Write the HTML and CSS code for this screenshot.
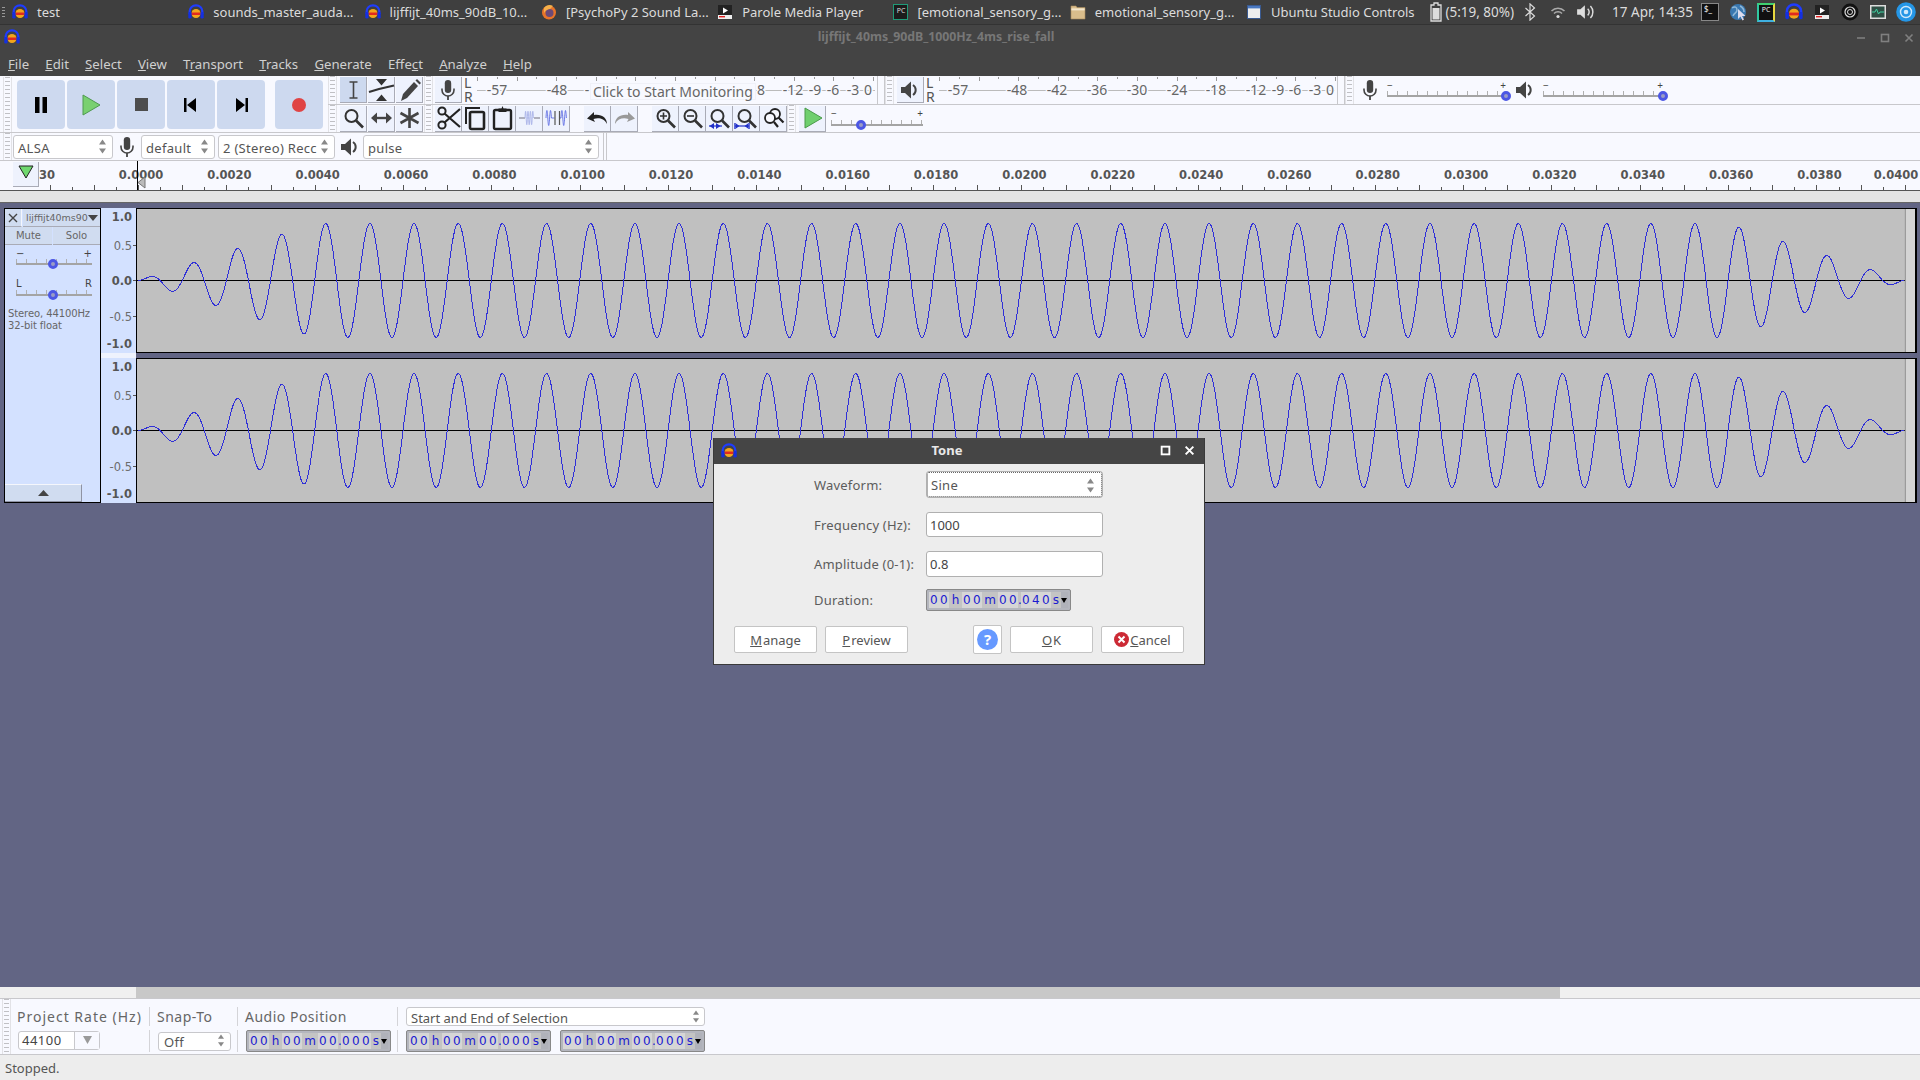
FILE: index.html
```html
<!DOCTYPE html>
<html lang="en">

<head>
    <meta charset="UTF-8">
    <title>lijffijt_40ms_90dB_1000Hz_4ms_rise_fall</title>
    <link rel="stylesheet" href="styles.css">
</head>

<body>
    <!-- icon sheet -->
    <svg class="icon-sheet" width="0" height="0">
        <symbol id="logo" viewBox="0 0 16 16">
            <ellipse cx="8" cy="9.500" rx="4.500" ry="4.500" fill="#f2a51c"/>
            <rect x="3.500" y="8.500" width="9" height="2.500" fill="#e02a20"/>
            <path d="M1.700 10V7a6.300 5.700 0 0 1 12.600 0v3" fill="none" stroke="#1f3cff" stroke-width="2.200"/>
            <rect x="0.300" y="8" width="3.200" height="6.500" rx="1.300" fill="#1430e0"/>
            <rect x="12.500" y="8" width="3.200" height="6.500" rx="1.300" fill="#1430e0"/>
        </symbol>
        <symbol id="firefox" viewBox="0 0 16 16">
            <circle cx="8" cy="8.500" r="7" fill="#e8742a"/>
            <circle cx="8.500" cy="9" r="4" fill="#6b4a78"/>
            <path d="M3 4C5 1 9 0 12 2L9 5C7 5 5 6 3 9Z" fill="#f6b04a"/>
        </symbol>
        <symbol id="parole" viewBox="0 0 16 16">
            <rect x="1" y="1" width="14" height="14" fill="#222"/>
            <rect x="1" y="11" width="14" height="4" fill="#eee"/>
            <rect x="2" y="12" width="6" height="1.400" fill="#e02020"/>
            <path d="M6 3.500 11 6.500 6 9.500Z" fill="#fff"/>
        </symbol>
        <symbol id="folder" viewBox="0 0 16 16">
            <path d="M1 2h5l1 1.500h8V15H1Z" fill="#d9bd8c" stroke="#a98c5c" stroke-width=".6"/>
            <rect x="1.400" y="4.400" width="13.200" height="2" fill="#f3e6cc"/>
        </symbol>
        <symbol id="window" viewBox="0 0 16 16">
            <rect x="1.500" y="1.500" width="13" height="13" fill="#eee" stroke="#3a5a90"/>
            <rect x="2" y="2" width="12" height="2.400" fill="#4a78c0"/>
        </symbol>
        <symbol id="mic" viewBox="0 0 16 22">
            <rect x="4.800" y="1" width="6.400" height="13" rx="3.200" fill="#444"/>
            <path d="M2 9.500v1.500a6 6 0 0 0 12 0V9.500" fill="none" stroke="#444" stroke-width="1.600"/>
            <path d="M8 17v4" stroke="#444" stroke-width="1.800"/>
        </symbol>
        <symbol id="speaker" viewBox="0 0 18 20">
            <path d="M1 7h4l6-5.500v17L5 13H1Z" fill="#444"/>
            <path d="M13 5a6 6 0 0 1 0 10" fill="none" stroke="#444" stroke-width="2"/>
        </symbol>
        <symbol id="updown" viewBox="0 0 7 15">
            <path d="M3.500 0.500 7 5.500H0Z" fill="#888"/>
            <path d="M3.500 14.500 7 9.500H0Z" fill="#888"/>
        </symbol>
        <symbol id="ibeam" viewBox="0 0 27 26">
            <path d="M9.500 5h8M13.500 5v16M9.500 21h8" fill="none" stroke="#444" stroke-width="1.600"/>
        </symbol>
        <symbol id="envelope" viewBox="0 0 27 26">
            <path d="M8 2h11l-5.500 6.500Z M8 24h11l-5.500-6.500Z" fill="#333"/>
            <path d="M1 15 11 12 26 8.500" fill="none" stroke="#333" stroke-width="2.200"/>
        </symbol>
        <symbol id="pencil" viewBox="0 0 27 26">
            <path d="M5 24 7 17 18 5l4 4L11 21Z" fill="#444"/>
            <path d="M19.500 3.500 21 2l4 4-1.500 1.500Z" fill="#444"/>
        </symbol>
        <symbol id="zoom" viewBox="0 0 27 26">
            <circle cx="11.500" cy="11" r="6" fill="none" stroke="#333" stroke-width="2"/>
            <path d="M16 15.500l7 7" stroke="#333" stroke-width="2.600"/>
        </symbol>
        <symbol id="timeshift" viewBox="0 0 27 26">
            <path d="M6 13h15" stroke="#444" stroke-width="2.400"/>
            <path d="M9 7.500 3 13l6 5.500ZM18 7.500 24 13l-6 5.500Z" fill="#444"/>
        </symbol>
        <symbol id="multi" viewBox="0 0 27 26">
            <path d="M13.500 3v20M4.500 8l18 10M22.500 8l-18 10" stroke="#444" stroke-width="2.600"/>
        </symbol>
        <symbol id="cut" viewBox="0 0 27 26">
            <circle cx="7" cy="20" r="3.600" fill="none" stroke="#222" stroke-width="2"/>
            <circle cx="7" cy="6" r="3.600" fill="none" stroke="#222" stroke-width="2"/>
            <path d="M9.500 8.500 25 22M9.500 17.500 25 4" stroke="#222" stroke-width="2.200"/>
        </symbol>
        <symbol id="copy" viewBox="0 0 27 26">
            <path d="M4 19V3h14" fill="none" stroke="#222" stroke-width="2"/>
            <rect x="8" y="7" width="14" height="17" rx="1.500" fill="none" stroke="#222" stroke-width="2.600"/>
        </symbol>
        <symbol id="paste" viewBox="0 0 27 26">
            <rect x="5" y="5" width="17" height="19" rx="1.500" fill="none" stroke="#222" stroke-width="2.400"/>
            <path d="M9.500 7V3.500h3L13.500 1l1 2.500h3V7Z" fill="#222"/>
        </symbol>
        <symbol id="trim" viewBox="0 0 27 26">
            <path d="M3 13h6M18 13h6" stroke="#9a9aa8" stroke-width="1.400"/>
            <path d="M9 13c.4-9 .8-9 1.200 0s.8 9 1.200 0 .8-9 1.200 0 .8 9 1.200 0 .8-9 1.200 0 .8 9 1.200 0 .8-9 1.200 0" fill="none" stroke="#a0aae4" stroke-width=".8"/>
        </symbol>
        <symbol id="silence" viewBox="0 0 27 26">
            <path d="M3 13c.6-10 1.200-10 1.800 0s1.200 10 1.800 0 1.200-10 1.800 0M18 13c.6-10 1.200-10 1.800 0s1.200 10 1.800 0 1.200-10 1.800 0" fill="none" stroke="#4a5ae0" stroke-width=".8"/>
            <path d="M8.500 13h3M16 13h2" stroke="#4a5ae0" stroke-width=".8"/>
            <path d="M12 6v14M16.500 6v14" stroke="#555" stroke-width="1.200"/>
        </symbol>
        <symbol id="undo" viewBox="0 0 27 26">
            <path d="M10 7 3 13.500l8 3.500-1.500-3C15 12.500 20 13.500 23 19c0-6-5-10-13-9Z" fill="#222"/>
        </symbol>
        <symbol id="redo" viewBox="0 0 27 26">
            <path d="M17 7l7 6.500-8 3.500 1.500-3C12 12.500 7 13.500 4 19c0-6 5-10 13-9Z" fill="#999"/>
        </symbol>
        <symbol id="zoomin" viewBox="0 0 27 26">
            <use href="#zoom"/>
            <path d="M8 11h7M11.500 7.500v7" stroke="#333" stroke-width="1.600"/>
        </symbol>
        <symbol id="zoomout" viewBox="0 0 27 26">
            <use href="#zoom"/>
            <path d="M8 11h7" stroke="#333" stroke-width="1.600"/>
        </symbol>
        <symbol id="zoomfit" viewBox="0 0 27 26">
            <use href="#zoom"/>
            <path d="M3 21h13" stroke="#2030c8" stroke-width="1.200"/>
            <path d="M8 18v6L3.500 21ZM10 18v6l4.500-3Z" fill="#2030c8"/>
        </symbol>
        <symbol id="zoomsel" viewBox="0 0 27 26">
            <use href="#zoom"/>
            <path d="M2 21h14" stroke="#2030c8" stroke-width="1.200"/>
            <path d="M2 18v6M16 18v6" stroke="#2030c8" stroke-width="1.400"/>
            <path d="M3 18.500v5l3.500-2.500ZM15 18.500v5l-3.500-2.500Z" fill="#2030c8"/>
        </symbol>
        <symbol id="zoomtoggle" viewBox="0 0 27 26">
            <circle cx="15" cy="9" r="5" fill="#f8f9ff" stroke="#222" stroke-width="1.800"/>
            <circle cx="10" cy="13" r="5" fill="#f8f9ff" stroke="#222" stroke-width="1.800"/>
            <path d="M18.500 12.500l5 5M14 17l4 5" stroke="#222" stroke-width="2.200"/>
        </symbol>
        <symbol id="greenplay" viewBox="0 0 27 26">
            <path d="M6 3 23 13 6 23Z" fill="#6fcf6f" stroke="#4a9a4a"/>
        </symbol>
    </svg>

    <div class="panel">
        <span class="panel-grip"></span>
        <div class="task"><svg class="ic16"><use href="#logo"/></svg>test</div>
        <div class="task"><svg class="ic16"><use href="#logo"/></svg>sounds_master_auda...</div>
        <div class="task"><svg class="ic16"><use href="#logo"/></svg>lijffijt_40ms_90dB_10...</div>
        <div class="task"><svg class="ic16"><use href="#firefox"/></svg>[PsychoPy 2 Sound La...</div>
        <div class="task"><svg class="ic16"><use href="#parole"/></svg>Parole Media Player</div>
        <div class="task"><span class="pc-icon">PC</span>[emotional_sensory_g...</div>
        <div class="task"><svg class="ic16"><use href="#folder"/></svg>emotional_sensory_g...</div>
        <div class="task"><svg class="ic16"><use href="#window"/></svg>Ubuntu Studio Controls</div>
        <div class="tray">
            <svg class="battery" viewBox="0 0 12 20"><path d="M4 1h4v2h3v16H1V3h3Z" fill="none" stroke="#ddd" stroke-width="1.300"/><rect x="2.500" y="6" width="7" height="11.500" fill="#ddd"/></svg>
            <span class="tray-text">(5:19, 80%)</span>
            <span class="tray-cell"><svg class="ic18" viewBox="0 0 16 20"><path d="M3 5.500l10 9-5 4.500V1l5 4.500-10 9" fill="none" stroke="#ddd" stroke-width="1.300"/></svg></span>
            <span class="tray-cell"><svg class="ic16" viewBox="0 0 16 16"><path d="M1.500 7a9 9 0 0 1 13 0M4 9.500a5.500 5.500 0 0 1 8 0" fill="none" stroke="#aaa" stroke-width="1.500"/><circle cx="8" cy="12.500" r="1.600" fill="#ddd"/></svg></span>
            <span class="tray-cell"><svg class="ic20" viewBox="0 0 18 18"><path d="M1 6.500h3L8 3v12l-4-3.500H1Z" fill="#ddd"/><path d="M10.500 6a4 4 0 0 1 0 6M13 3.500a8 8 0 0 1 0 11" fill="none" stroke="#ddd" stroke-width="1.300"/></svg></span>
            <span class="tray-text tray-clock">17 Apr, 14:35</span>
            <span class="tray-cell"><span class="term-icon">$_</span></span>
            <span class="tray-cell"><svg class="ic18" viewBox="0 0 18 18"><circle cx="9" cy="9" r="8" fill="#3a78b0"/><path d="M3 5c3-2 5-1 5 2s-3 3-4 6M11 3c2 1 4 3 4 6" fill="none" stroke="#8fb8d8" stroke-width="1.500"/><path d="M9 6v10l2.500-2.500 2 4 1.500-1-2-3.500h3.500Z" fill="#dde"/></svg></span>
            <span class="tray-cell"><span class="pc-color">PC</span></span>
            <span class="tray-cell"><svg class="ic18"><use href="#logo"/></svg></span>
            <span class="tray-cell"><svg class="ic16"><use href="#parole"/></svg></span>
            <span class="tray-cell"><svg class="ic18" viewBox="0 0 18 18"><circle cx="9" cy="9" r="8.500" fill="#111"/><circle cx="9" cy="9" r="5" fill="none" stroke="#ddd" stroke-width="1.200"/><circle cx="9" cy="9" r="2.500" fill="none" stroke="#ddd"/></svg></span>
            <span class="tray-cell"><svg class="ic18" viewBox="0 0 18 18"><rect x="1" y="2" width="16" height="14" fill="#ddd"/><rect x="2.500" y="3.500" width="13" height="11" fill="#2f4f45"/><path d="M3 9h3l1.500-3 2 5 1.500-2h4" fill="none" stroke="#3fd0a0"/></svg></span>
            <span class="tray-cell"><svg class="ic18 disc" viewBox="0 0 20 20"><circle cx="10" cy="10" r="9.800" fill="#2596e6"/><circle cx="10" cy="10" r="5.500" fill="none" stroke="#cfe8fb" stroke-width="1.400"/><circle cx="10" cy="10" r="2.300" fill="#cfe8fb"/></svg></span>
        </div>
    </div>

    <div class="win-head">
        <svg class="ic16 win-logo"><use href="#logo"/></svg>
        <div class="win-title">lijffijt_40ms_90dB_1000Hz_4ms_rise_fall</div>
        <div class="win-btns">
            <svg class="win-btn" viewBox="0 0 10 10"><path d="M1 5h8" stroke="#808080" stroke-width="1.500"/></svg>
            <svg class="win-btn" viewBox="0 0 10 10"><rect x="1.500" y="1.500" width="7" height="7" fill="none" stroke="#808080" stroke-width="1.600"/></svg>
            <svg class="win-btn" viewBox="0 0 10 10"><path d="M1.500 1.500l7 7M8.500 1.500l-7 7" stroke="#808080" stroke-width="1.600"/></svg>
        </div>
        <div class="menu">
            <span><u>F</u>ile</span><span><u>E</u>dit</span><span><u>S</u>elect</span><span><u>V</u>iew</span><span>T<u>r</u>ansport</span><span><u>T</u>racks</span><span><u>G</u>enerate</span><span>Effe<u>c</u>t</span><span><u>A</u>nalyze</span><span><u>H</u>elp</span>
        </div>
    </div>

    <div class="dock">
        <div class="dock-top">
            <div class="transport">
                <span class="grip"></span>
                <div class="tbtns">
                    <div class="tbtn"><svg width="20" height="20"><path d="M4 2h4.500v16H4ZM11.500 2H16v16h-4.500Z" fill="#000"/></svg></div>
                    <div class="tbtn"><svg width="20" height="24"><path d="M2 2 19 12 2 22Z" fill="#79d070" stroke="#4f9a50"/></svg></div>
                    <div class="tbtn"><svg width="14" height="14"><rect x="1" width="13" height="13" fill="#4d4d4d"/></svg></div>
                    <div class="tbtn"><svg width="16" height="16"><path d="M1 1h2.500v14H1ZM13 1v14L4 8Z" fill="#000"/></svg></div>
                    <div class="tbtn"><svg width="16" height="16"><path d="M3 1v14l9-7ZM12.500 1H15v14h-2.500Z" fill="#000"/></svg></div>
                    <div class="tbtn rec"><svg width="16" height="16"><circle cx="8" cy="8" r="7" fill="#e04444"/></svg></div>
                </div>
            </div>
            <div class="dock-rows">
                <div class="dock-row">
                    <span class="grip"></span>
                    <div class="btn-group tools">
                        <div class="tb on"><svg><use href="#ibeam"/></svg></div>
                        <div class="tb"><svg><use href="#envelope"/></svg></div>
                        <div class="tb"><svg><use href="#pencil"/></svg></div>
                    </div>
                    <span class="grip"></span>
                    <div class="tb meter-btn"><svg class="tb-mic"><use href="#mic"/></svg></div>
                    <div class="lr"><span>L</span><span>R</span></div>
                    <div class="meter-wrap input">
                        <svg id="meterIn" class="meter" width="402" height="28"></svg>
                        <div class="monitor">Click to Start Monitoring</div>
                    </div>
                    <span class="seps"></span>
                    <span class="grip"></span>
                    <div class="tb meter-btn spk"><svg class="tb-spk"><use href="#speaker"/></svg></div>
                    <div class="lr"><span>L</span><span>R</span></div>
                    <svg id="meterOut" class="meter" width="400" height="28"></svg>
                    <span class="seps"></span>
                    <span class="grip"></span>
                    <svg class="mix-mic"><use href="#mic"/></svg>
                    <div class="slider mix1"><span>−</span><span>+</span><i class="thumb end"></i></div>
                    <svg class="mix-spk"><use href="#speaker"/></svg>
                    <div class="slider mix2"><span>−</span><span>+</span><i class="thumb end"></i></div>
                </div>
                <div class="dock-row">
                    <span class="grip"></span>
                    <div class="btn-group tools">
                        <div class="tb"><svg><use href="#zoom"/></svg></div>
                        <div class="tb"><svg><use href="#timeshift"/></svg></div>
                        <div class="tb"><svg><use href="#multi"/></svg></div>
                    </div>
                    <span class="grip"></span>
                    <div class="btn-group edit">
                        <div class="tb"><svg><use href="#cut"/></svg></div>
                        <div class="tb"><svg><use href="#copy"/></svg></div>
                        <div class="tb"><svg><use href="#paste"/></svg></div>
                        <div class="tb"><svg><use href="#trim"/></svg></div>
                        <div class="tb"><svg><use href="#silence"/></svg></div>
                    </div>
                    <div class="btn-group undo">
                        <div class="tb"><svg><use href="#undo"/></svg></div>
                        <div class="tb"><svg><use href="#redo"/></svg></div>
                    </div>
                    <div class="btn-group zooms">
                        <div class="tb"><svg><use href="#zoomin"/></svg></div>
                        <div class="tb"><svg><use href="#zoomout"/></svg></div>
                        <div class="tb"><svg><use href="#zoomfit"/></svg></div>
                        <div class="tb"><svg><use href="#zoomsel"/></svg></div>
                        <div class="tb"><svg><use href="#zoomtoggle"/></svg></div>
                    </div>
                    <span class="grip"></span>
                    <div class="tb play-at"><svg><use href="#greenplay"/></svg></div>
                    <div class="slider speed"><span>−</span><span>+</span><i class="thumb" style="left: 33%"></i></div>
                </div>
            </div>
        </div>
        <div class="dock-row device-row">
            <span class="grip"></span>
            <div class="combo host">ALSA<svg class="updown"><use href="#updown"/></svg></div>
            <span class="dev-icon"><svg class="dev-mic"><use href="#mic"/></svg></span>
            <div class="combo rec-dev">default<svg class="updown"><use href="#updown"/></svg></div>
            <div class="combo chans"><span>2 (Stereo) Recc</span><svg class="updown"><use href="#updown"/></svg></div>
            <span class="dev-icon"><svg class="dev-spk"><use href="#speaker"/></svg></span>
            <div class="combo play-dev">pulse<svg class="updown"><use href="#updown"/></svg></div>
            <span class="seps dev-seps"></span>
        </div>
    </div>

    <div class="ruler">
        <svg id="timeRuler" width="1920" height="29"></svg>
        <div class="pin"><svg width="16" height="14"><path d="M1 1h14L8 13Z" fill="#6fd86f" stroke="#222" stroke-width="1"/></svg></div>
    </div>
    <div class="band"></div>

    <div class="track-area">
        <div class="track">
            <div class="track-info">
                <div class="info-top">
                    <div class="tk-close"><svg width="10" height="10"><path d="M1 1l8 8M9 1l-8 8" stroke="#444" stroke-width="1.400"/></svg></div>
                    <div class="tk-name"><span>lijffijt40ms90</span><svg width="10" height="6"><path d="M0 0h10L5 6Z" fill="#444"/></svg></div>
                </div>
                <div class="info-btns"><div>Mute</div><div>Solo</div></div>
                <div class="slider gain"><span>−</span><span>+</span><i class="thumb" style="left: 48.5%"></i></div>
                <div class="slider pan"><span>L</span><span>R</span><i class="thumb" style="left: 48.5%"></i></div>
                <div class="tk-format">Stereo, 44100Hz<br>32-bit float</div>
                <div class="tk-collapse"><svg width="11" height="6"><path d="M5.500 0 11 6H0Z" fill="#444"/></svg></div>
            </div>
            <svg id="ampRuler" class="amp-ruler" width="35" height="295"></svg>
            <div class="waves">
                <div class="wave"><svg class="wave-svg" width="1777" height="143"></svg></div>
                <div class="wave"><svg class="wave-svg" width="1777" height="143"></svg></div>
            </div>
        </div>
    </div>

    <div class="hscroll"><span class="thumb-h"></span></div>

    <div class="selbar">
        <span class="grip"></span>
        <div class="selcol rate">
            <div class="sel-label">Project Rate (Hz)</div>
            <div class="sel-value"><div class="rate-box"><span>44100</span><b><svg width="9" height="8"><path d="M0 0h9L4.500 8Z" fill="#999"/></svg></b></div></div>
        </div>
        <div class="selcol snap">
            <div class="sel-label">Snap-To</div>
            <div class="sel-value"><div class="combo off">Off<svg class="updown"><use href="#updown"/></svg></div></div>
        </div>
        <div class="selcol audio">
            <div class="sel-label">Audio Position</div>
            <div class="sel-value">
                <div class="numctl"><span class="f">00</span><span class="u">h</span><span class="f">00</span><span class="u m">m</span><span class="f">00</span><span class="u dot">.</span><span class="f f3">000</span><span class="u">s</span><span class="arrow"></span></div>
            </div>
        </div>
        <div class="selcol sel">
            <div class="sel-label"><div class="combo selmode">Start and End of Selection<svg class="updown"><use href="#updown"/></svg></div></div>
            <div class="sel-value two">
                <div class="numctl"><span class="f">00</span><span class="u">h</span><span class="f">00</span><span class="u m">m</span><span class="f">00</span><span class="u dot">.</span><span class="f f3">000</span><span class="u">s</span><span class="arrow"></span></div>
                <div class="numctl"><span class="f">00</span><span class="u">h</span><span class="f">00</span><span class="u m">m</span><span class="f">00</span><span class="u dot">.</span><span class="f f3">000</span><span class="u">s</span><span class="arrow"></span></div>
            </div>
        </div>
    </div>
    <div class="statusbar">Stopped.</div>

    <div class="dialog">
        <div class="dlg-title">
            <svg class="ic16 dlg-logo"><use href="#logo"/></svg>
            <span>Tone</span>
            <svg class="dlg-max" viewBox="0 0 10 10"><rect x="1.500" y="1.500" width="7" height="7" fill="none" stroke="#fff" stroke-width="1.700"/></svg>
            <svg class="dlg-close" viewBox="0 0 10 10"><path d="M1.500 1.500l7 7M8.500 1.500l-7 7" stroke="#fff" stroke-width="1.800"/></svg>
        </div>
        <div class="dlg-body">
            <div class="drow r1"><label>Waveform:</label><div class="combo wavecombo"><span class="focus">Sine</span><svg class="updown"><use href="#updown"/></svg></div></div>
            <div class="drow r2"><label>Frequency (Hz):</label><div class="field">1000</div></div>
            <div class="drow r3"><label>Amplitude (0-1):</label><div class="field">0.8</div></div>
            <div class="drow r4"><label>Duration:</label>
                <div class="numctl"><span class="f">00</span><span class="u">h</span><span class="f">00</span><span class="u m">m</span><span class="f">00</span><span class="u dot">.</span><span class="f f3">040</span><span class="u">s</span><span class="arrow"></span></div>
            </div>
            <div class="dlg-btns">
                <div class="dbtn"><u>M</u>anage</div>
                <div class="dbtn"><u>P</u>review</div>
                <div class="dbtn help"><span>?</span></div>
                <div class="dbtn"><u>O</u>K</div>
                <div class="dbtn"><svg width="15" height="15"><circle cx="7.500" cy="7.500" r="7.500" fill="#cc2a35"/><path d="M4.500 4.500l6 6M10.500 4.500l-6 6" stroke="#fff" stroke-width="2"/></svg><span><u>C</u>ancel</span></div>
            </div>
        </div>
    </div>

    <script src="script.js"></script>
</body>

</html>
```

FILE: styles.css
```css
body {
    margin: 0;
    width: 1920px;
    height: 1080px;
    display: flex;
    flex-direction: column;
    overflow: hidden;
    position: relative;
    background: #626584;
    font-family: 'Noto Sans', sans-serif;
    font-size: 13px;
    color: #555;
}

.icon-sheet {
    position: absolute;
}

.ic16 {
    width: 16px;
    height: 16px;
    flex: none;
}

.ic18 {
    width: 18px;
    height: 18px;
    flex: none;
}

.ic20 {
    width: 20px;
    height: 20px;
    flex: none;
}

.panel {
    height: 24px;
    flex: none;
    display: flex;
    align-items: center;
    background: #3f3f3f;
    border-bottom: 1px solid #333;
    color: #dcdcdc;
    padding-left: 12px;
    position: relative;
    white-space: nowrap;
}

.panel-grip {
    position: absolute;
    left: 2px;
    top: 7px;
    width: 3px;
    height: 10px;
    background: repeating-linear-gradient(to bottom, #999 0 1px, transparent 1px 3px);
}

.task {
    width: 176.3px;
    flex: none;
    display: flex;
    align-items: center;
    gap: 9px;
    margin-left: 0;
}

.pc-icon {
    width: 15px;
    height: 16px;
    flex: none;
    box-sizing: border-box;
    border: 1px solid #1f9a78;
    background: #1c1c1c;
    color: #ddd;
    font-size: 7px;
    line-height: 11px;
    text-align: center;
}

.tray {
    margin-left: auto;
    display: flex;
    align-items: center;
}

.battery {
    width: 12px;
    height: 20px;
    margin-right: 3px;
}

.tray-text {
    margin-right: 2px;
    font-size: 13.5px;
}

.tray-clock {
    margin: 0 3px 0 12px;
}

.tray-cell {
    width: 28px;
    display: flex;
    justify-content: center;
    align-items: center;
}

.term-icon {
    width: 16px;
    height: 16px;
    border: 1px solid #888;
    background: #111;
    color: #eee;
    font-size: 8px;
    line-height: 10px;
    text-indent: 2px;
}

.pc-color {
    width: 14px;
    height: 15px;
    border: 2px solid;
    border-color: #3fd070 #e8d840 #3fb0e0 #30c8a0;
    background: #111;
    color: #eee;
    font-size: 7px;
    line-height: 10px;
    text-align: center;
}

.disc {
    width: 20px;
    height: 20px;
}

.win-head {
    height: 51px;
    flex: none;
    background: #444;
    position: relative;
    color: #d0d0d0;
}

.win-logo {
    position: absolute;
    left: 4px;
    top: 4px;
}

.win-title {
    height: 25px;
    line-height: 24px;
    text-align: center;
    font-size: 12.3px;
    font-weight: bold;
    color: #777;
    padding-right: 48px;
}

.win-btns {
    position: absolute;
    right: 6px;
    top: 8px;
    display: flex;
    gap: 14px;
}

.win-btn {
    width: 10px;
    height: 10px;
}

.menu {
    display: flex;
    gap: 16.2px;
    padding: 3px 0 0 8px;
    font-size: 13.2px;
    line-height: 22px;
}

.dock {
    flex: none;
    background: #f8f9ff;
}

.dock-top {
    display: flex;
    height: 57px;
}

.transport {
    width: 328px;
    box-sizing: border-box;
    padding-left: 3px;
    display: flex;
    align-items: stretch;
    border-bottom: 1px solid #c8c8cc;
    border-top: 1px solid #f8f9ff;
}

.tbtns {
    display: flex;
    gap: 2px;
    align-items: center;
    margin-left: 5px;
}

.tbtn {
    width: 48px;
    height: 49px;
    border-radius: 4px;
    background: #cdd9ef;
    display: flex;
    align-items: center;
    justify-content: center;
}

.tbtn.rec {
    margin-left: 8px;
}

.dock-rows {
    flex: 1;
    min-width: 0;
}

.dock-row {
    height: 28px;
    box-sizing: content-box;
    display: flex;
    align-items: center;
    border-bottom: 1px solid #c8c8cc;
}

.dock-rows .dock-row:last-child {
    height: 27px;
}

.grip {
    width: 9px;
    align-self: stretch;
    flex: none;
    box-sizing: border-box;
    border-left: 1px solid #e2e2e6;
    border-right: 1px solid #e2e2e6;
    background: repeating-linear-gradient(to bottom, #c0c0c4 0 1px, transparent 1px 4px) center / 5px 100% no-repeat;
}

.btn-group {
    display: flex;
    flex: none;
}

.tb {
    width: 27px;
    height: 26px;
    box-sizing: border-box;
    flex: none;
    display: flex;
    align-items: center;
    justify-content: center;
    background: #eef2fd;
    border-right: 1px solid #a9abb6;
    border-bottom: 1px solid #a9abb6;
}

.tb svg {
    width: 27px;
    height: 26px;
    flex: none;
}

.tb.on {
    background: #cdd9ef;
}

.tools {
    margin: 0 1px 0 3px;
    gap: 1px;
}

.edit {
    margin-left: 2px;
}

.undo {
    margin-left: 14px;
}

.zooms {
    margin-left: 14px;
}

.meter-btn {
    margin-left: 2px;
}

.tb svg.tb-mic {
    width: 16px;
    height: 22px;
}

.tb svg.tb-spk {
    width: 18px;
    height: 20px;
}

.spk {
    margin-left: 3px;
    padding-right: 3px;
}

.lr {
    width: 13px;
    flex: none;
    display: flex;
    flex-direction: column;
    font-size: 14px;
    line-height: 14px;
    text-indent: 2px;
}

.meter-wrap {
    position: relative;
    height: 28px;
    flex: none;
}

.meter {
    display: block;
    flex: none;
}

.meter text {
    font-family: 'Noto Sans', sans-serif;
    font-size: 14px;
    fill: #666;
    text-anchor: middle;
    paint-order: stroke;
    stroke: #f8f9ff;
    stroke-width: 3px;
}

.monitor {
    position: absolute;
    left: 115px;
    top: 7px;
    width: 166px;
    height: 17px;
    box-sizing: border-box;
    background: #f8f9ff;
    border: 1px solid #f0f1f8;
    font-size: 14px;
    line-height: 15px;
    text-align: center;
    color: #666;
    white-space: nowrap;
}

.seps {
    width: 8px;
    flex: none;
    align-self: stretch;
    box-sizing: border-box;
    border-left: 1px solid #c8c8cc;
    border-right: 1px solid #c8c8cc;
    margin-right: 0;
}

.mix-mic {
    width: 16px;
    height: 22px;
    margin-left: 8px;
    flex: none;
}

.mix-spk {
    width: 18px;
    height: 20px;
    margin-left: 9px;
    flex: none;
}

.slider {
    position: relative;
    height: 22px;
    box-sizing: border-box;
    flex: none;
    display: flex;
    justify-content: space-between;
    font-size: 10px;
    line-height: 10px;
    color: #444;
}

.slider::before {
    content: '';
    position: absolute;
    left: 0;
    right: 0;
    bottom: 4px;
    height: 2px;
    background: #a4a4a4;
}

.slider::after {
    content: '';
    position: absolute;
    left: 0;
    right: 0;
    bottom: 6px;
    height: 4px;
    background: repeating-linear-gradient(to right, #b0b0b0 0 1px, transparent 1px 10px);
}

.thumb {
    position: absolute;
    bottom: 0;
    width: 10px;
    height: 10px;
    box-sizing: border-box;
    margin-left: -5px;
    border: 3px solid #4c57e4;
    border-radius: 50%;
    background: #9a9cc4;
    z-index: 1;
}

.thumb.end {
    left: 100%;
}

.mix1 {
    width: 119px;
    margin: 0 0 0 9px;
    padding-top: 1px;
}

.mix2 {
    width: 120px;
    margin-left: 10px;
    padding-top: 1px;
}

.speed {
    width: 92px;
    margin-left: 5px;
}

.play-at {
    margin-left: 3px;
}

.device-row {
    height: 27px;
    padding-left: 3px;
    gap: 0;
}

.combo {
    box-sizing: border-box;
    height: 24px;
    flex: none;
    display: flex;
    align-items: center;
    justify-content: space-between;
    padding: 3px 6px 0 4px;
    background: #fff;
    border: 1px solid #c8c8cc;
    border-radius: 3px;
    color: #555;
    letter-spacing: .3px;
    white-space: nowrap;
}

.updown {
    width: 7px;
    height: 15px;
    flex: none;
    margin-top: -3px;
}

.host {
    width: 100px;
    margin-left: 1px;
}

.rec-dev {
    width: 74px;
}

.chans {
    width: 117px;
    margin-left: 3px;
}

.play-dev {
    width: 236px;
}

.dev-icon {
    width: 28px;
    flex: none;
    display: flex;
    justify-content: center;
}

.dev-mic {
    width: 16px;
    height: 22px;
}

.dev-spk {
    width: 18px;
    height: 20px;
}

.dev-seps {
    width: 4px;
    margin-left: 4px;
}

.ruler {
    position: relative;
    flex: none;
    height: 29px;
    background: #f8f9ff;
    border-bottom: 1px solid #555;
}

.ruler svg {
    display: block;
}

.ruler text {
    font-family: 'DejaVu Sans', sans-serif;
    font-weight: bold;
    font-size: 11.5px;
    fill: #555;
    text-anchor: middle;
}

.pin {
    position: absolute;
    left: 13px;
    top: 1px;
    width: 26px;
    height: 25px;
    box-sizing: border-box;
    padding: 3px 0 0 5px;
    background: #eef2fd;
    border-right: 1px solid #a9abb6;
    border-bottom: 1px solid #a9abb6;
}

.pin svg {
    display: block;
}

.band {
    flex: none;
    height: 11px;
    background: #e4e4e4;
    border-bottom: 1px solid #666;
}

.track-area {
    flex: 1;
    min-height: 0;
    padding: 5px 0 0 4px;
}

.track {
    display: flex;
    height: 295px;
}

.track-info {
    width: 97px;
    flex: none;
    box-sizing: border-box;
    border: 1px solid #000;
    background: #d3e1ff;
    position: relative;
    font-family: 'DejaVu Sans', sans-serif;
    font-size: 10px;
    color: #666;
}

.info-top {
    display: flex;
    height: 18px;
}

.tk-close {
    width: 17px;
    box-sizing: border-box;
    display: flex;
    align-items: center;
    justify-content: center;
    background: #d0dcf0;
    border-right: 1px solid #f4f6fc;
    border-bottom: 1px solid #a9abb6;
}

.tk-name {
    flex: 1;
    min-width: 0;
    display: flex;
    align-items: center;
    padding-left: 3px;
    background: #d0dcf0;
    border-bottom: 1px solid #a9abb6;
    white-space: nowrap;
    margin-left: 1px;
    font-size: 9.5px;
}

.tk-name span {
    width: 62px;
    flex: none;
}

.info-btns {
    display: flex;
    height: 18px;
    gap: 1px;
    line-height: 18px;
    text-align: center;
}

.info-btns div {
    flex: 1;
    background: #d0dcf0;
    border-bottom: 1px solid #a9abb6;
}

.gain {
    width: 76px;
    height: 20px;
    margin: 4px 0 0 11px;
}

.pan {
    width: 76px;
    height: 21px;
    margin: 10px 0 0 11px;
}

.tk-format {
    margin: 8px 0 0 3px;
    line-height: 12px;
    font-size: 10px;
    letter-spacing: -.1px;
}

.tk-collapse {
    position: absolute;
    left: 0;
    bottom: 0;
    width: 77px;
    height: 18px;
    box-sizing: border-box;
    display: flex;
    align-items: center;
    justify-content: center;
    background: #d0dcf0;
    border-top: 1px solid #f4f6fc;
    border-right: 1px solid #8f93a4;
    border-bottom: 1px solid #8f93a4;
}

.amp-ruler {
    flex: none;
    background: #d3e1ff;
}

.amp-ruler text {
    font-family: 'DejaVu Sans', sans-serif;
    font-size: 11.5px;
    fill: #6c6c6c;
    text-anchor: end;
}

.amp-ruler .main {
    font-weight: bold;
    fill: #555;
}

.waves {
    display: flex;
    flex-direction: column;
    gap: 5px;
}

.wave {
    width: 1781px;
    height: 145px;
    box-sizing: border-box;
    border: 1px solid #000;
    border-right-width: 2px;
    background: #d4d4d4;
}

.wave-svg {
    display: block;
}

.hscroll {
    height: 11px;
    flex: none;
    background: #f0f0f0;
    padding-left: 136px;
}

.thumb-h {
    display: block;
    width: 1424px;
    height: 11px;
    background: #c8c8c8;
}

.selbar {
    height: 57px;
    flex: none;
    box-sizing: border-box;
    display: flex;
    padding-left: 2px;
    background: #f8f9ff;
    border-top: 1px solid #c8c8cc;
    border-bottom: 1px solid #c8c8cc;
}

.selcol {
    flex: none;
    box-sizing: border-box;
    padding-top: 8px;
}

.sel-label {
    height: 19px;
    margin-bottom: 4px;
    font-size: 14px;
    line-height: 19px;
    letter-spacing: .5px;
    color: #666;
    white-space: nowrap;
}

.sel-value {
    height: 22px;
    display: flex;
    align-items: center;
}

.rate {
    width: 138px;
    padding-left: 6px;
}

.rate .sel-label {
    letter-spacing: 1px;
}

.snap {
    width: 88px;
}

.audio {
    width: 160px;
}

.sel {
    width: 310px;
}

.snap .sel-label,
.audio .sel-label,
.snap .sel-value,
.audio .sel-value,
.sel .sel-label,
.sel .sel-value {
    border-left: 1px solid #d4d4d8;
    padding-left: 7px;
}

.rate-box {
    width: 82px;
    height: 19px;
    box-sizing: border-box;
    display: flex;
    margin: -2px 0 0 1px;
    border: 1px solid #c8c8cc;
    border-radius: 3px;
    background: #fff;
    line-height: 17px;
    letter-spacing: .5px;
    padding-left: 3px;
    color: #444;
}

.rate-box span {
    width: 52px;
}

.rate-box b {
    flex: 1;
    display: flex;
    align-items: center;
    justify-content: center;
    background: #f8f9ff;
    border-left: 1px solid #c8c8cc;
}

.off {
    width: 73px;
    height: 19px;
    padding: 2px 6px 0 5px;
    margin-left: 1px;
}

.selmode {
    width: 299px;
    height: 19px;
    margin-left: 1px;
    padding: 3px 5px 0 4px;
    letter-spacing: 0;
    font-size: 13px;
}

.off .updown,
.selmode .updown {
    width: 6px;
    height: 13px;
}

.two {
    gap: 8px;
}

.numctl {
    width: 145px;
    height: 22px;
    box-sizing: border-box;
    flex: none;
    display: flex;
    align-items: stretch;
    padding: 2px;
    margin-left: 1px;
    background: #b4b6be;
    border: 1px solid #888;
    border-radius: 2px;
    font-family: 'DejaVu Sans', sans-serif;
    font-size: 12px;
    line-height: 16px;
    color: #1a1ad0;
}

.numctl .f {
    width: 20px;
    flex: none;
    background: #d6d6d6;
    letter-spacing: 2.4px;
    padding-left: 1px;
    box-sizing: border-box;
}

.numctl .f3 {
    width: 30px;
}

.numctl .u {
    width: 13px;
    flex: none;
    text-align: center;
    background: #c4c4c4;
}

.numctl .m {
    width: 16px;
}

.numctl .dot {
    width: 3px;
}

.numctl .f3 + .u {
    width: 10px;
}

.numctl .arrow {
    width: 7px;
    flex: none;
    position: relative;
    background: #b0b2ba;
}

.numctl .arrow::after {
    content: '';
    position: absolute;
    left: 0;
    top: 6px;
    border-left: 3.5px solid transparent;
    border-right: 3.5px solid transparent;
    border-top: 5px solid #000;
}

.statusbar {
    height: 25px;
    flex: none;
    background: #ededed;
    padding-left: 5px;
    line-height: 27px;
    color: #555;
}

.dialog {
    position: absolute;
    left: 713px;
    top: 438px;
    width: 492px;
    height: 227px;
    box-sizing: border-box;
    border: 1px solid #3a3a3a;
    border-top: 0;
    background: #ededed;
}

.dlg-title {
    position: relative;
    height: 26px;
    padding-right: 24px;
    background: #454545;
    color: #e8e8e8;
    font-size: 13px;
    font-weight: bold;
    line-height: 25px;
    text-align: center;
}

.dlg-logo {
    position: absolute;
    left: 7px;
    top: 5px;
}

.dlg-max,
.dlg-close {
    position: absolute;
    top: 7px;
    width: 11px;
    height: 11px;
}

.dlg-max {
    left: 446px;
}

.dlg-close {
    left: 470px;
}

.dlg-body {
    padding: 7px 0 0 0;
}

.drow {
    display: flex;
    align-items: center;
    padding-left: 100px;
}

.drow label {
    width: 112px;
    flex: none;
    letter-spacing: .2px;
    color: #5c5c5c;
}

.drow .numctl {
    margin-left: 0;
}

.r1 {
    height: 27px;
}

.r2 {
    height: 25px;
    margin-top: 14px;
}

.r3 {
    height: 26px;
    margin-top: 14px;
}

.r4 {
    height: 22px;
    margin-top: 12px;
}

.wavecombo {
    width: 177px;
    height: 27px;
    padding: 1px 8px 0 1px;
    border-color: #b0b0b0;
    outline: 1px dotted #666;
    outline-offset: -2px;
}

.wavecombo .updown {
    margin-top: 0;
}

.wavecombo .focus {
    padding-left: 3px;
}

.field {
    width: 177px;
    height: 100%;
    box-sizing: border-box;
    padding-left: 3px;
    background: #fff;
    border: 1px solid #b0b0b0;
    border-radius: 3px;
    display: flex;
    align-items: center;
    color: #444;
}

.dlg-btns {
    display: flex;
    align-items: center;
    margin-top: 14px;
    padding-left: 20px;
    gap: 8px;
}

.dbtn {
    width: 83px;
    height: 27px;
    box-sizing: border-box;
    display: flex;
    align-items: center;
    justify-content: center;
    gap: 1px;
    background: #fff;
    border: 1px solid #c4c4c4;
    border-radius: 2px;
    color: #555;
}

.help {
    width: 29px;
    height: 29px;
    margin-left: 57px;
}

.help span {
    width: 21px;
    height: 21px;
    border-radius: 50%;
    background: #6699ff;
    color: #fff;
    font-size: 15px;
    font-weight: bold;
    line-height: 21px;
    text-align: center;
}
```

FILE: script.js
```js
const NS = 'http://www.w3.org/2000/svg';
const MS = 44.17;   // pixels per millisecond on the timeline
const START = 138;  // x of time zero

function add(svg, name, attrs, text) {
    const el = document.createElementNS(NS, name);
    for (const key in attrs) el.setAttribute(key, attrs[key]);
    if (text !== undefined) el.textContent = text;
    svg.appendChild(el);
    return el;
}

function drawTimeRuler() {
    const svg = document.getElementById('timeRuler');
    for (let i = -4; i <= 80; i++) {
        const x = Math.round(START + i * MS / 2) + 0.5;
        const h = i % 2 === 0 ? 5 : 3;
        add(svg, 'line', { x1: x, x2: x, y1: 29 - h, y2: 29, stroke: '#555' });
    }
    add(svg, 'text', { x: 47, y: 17.5 }, '30');
    for (let ms = 0; ms <= 40; ms += 2) {
        const label = (ms / 1000).toFixed(4);
        const x = ms === 40 ? 1896 : START + ms * MS + 3;
        add(svg, 'text', { x: x, y: 17.5 }, label);
    }
    // playhead and its little marker
    add(svg, 'line', { x1: 137.5, x2: 137.5, y1: 0, y2: 29, stroke: '#000' });
    add(svg, 'path', { d: 'M145 16V27L138 21.5Z', fill: '#bbb', stroke: '#777' });
}

function drawMeter(id, labels, width) {
    const svg = document.getElementById(id);
    add(svg, 'line', { x1: 2, x2: width - 2, y1: 14.5, y2: 14.5, stroke: '#bbb' });
    for (let x = 2; x < width; x += 19.8) {
        const tall = Math.round((x - 2) / 19.8) % 2 === 0;
        const px = Math.round(x) + 0.5;
        add(svg, 'line', { x1: px, x2: px, y1: 1, y2: tall ? 5 : 3, stroke: '#999' });
    }
    labels.forEach(([text, x]) => add(svg, 'text', { x: x, y: 19 }, text));
}

function drawAmpRuler() {
    const svg = document.getElementById('ampRuler');
    const marks = [['1.0', 8, true], ['0.5', 37, false], ['0.0', 72, true], ['-0.5', 108, false], ['-1.0', 135, true]];
    [0, 150].forEach(top => {
        marks.forEach(([text, y, main]) => {
            add(svg, 'text', { x: 31, y: top + y + 4.5, class: main ? 'main' : '' }, text);
            if (text !== '1.0' && text !== '-1.0') {
                add(svg, 'line', { x1: 32, x2: 35, y1: top + y + 0.5, y2: top + y + 0.5, stroke: '#555' });
            }
        });
    });
    add(svg, 'rect', { x: 0, y: 145, width: 35, height: 5, fill: '#eef2fd' });
}

function drawWave(svg) {
    const mid = 71.5;
    const end = 40 * MS;
    add(svg, 'rect', { x: 0, y: 0, width: end + 1, height: 143, fill: '#c0c0c0' });
    add(svg, 'line', { x1: end + 1.5, x2: end + 1.5, y1: 0, y2: 143, stroke: '#8c8c8c' });
    add(svg, 'line', { x1: 0, x2: end + 1, y1: mid, y2: mid, stroke: '#000' });
    const pts = [];
    for (let x = 0; x <= end; x++) {
        const t = x / MS;
        const env = Math.min(t, 40 - t, 4) / 4;
        pts.push((x + 1) + ',' + (mid - 57 * env * Math.sin(2 * Math.PI * t)).toFixed(1));
    }
    add(svg, 'polyline', { points: pts.join(' '), fill: 'none', stroke: '#3030d8', 'shape-rendering': 'crispEdges' });
}

drawTimeRuler();
drawMeter('meterIn', [['-57', 22], ['-48', 82], ['-', 112], ['8', 286], ['-12', 318], ['-9', 340], ['-6', 358], ['-3', 378], ['0', 393]], 402);
drawMeter('meterOut', [['-57', 21], ['-48', 80], ['-42', 120], ['-36', 160], ['-30', 200], ['-24', 240], ['-18', 279], ['-12', 319], ['-9', 341], ['-6', 358], ['-3', 378], ['0', 393]], 400);
drawAmpRuler();
document.querySelectorAll('.wave-svg').forEach(drawWave);
```
